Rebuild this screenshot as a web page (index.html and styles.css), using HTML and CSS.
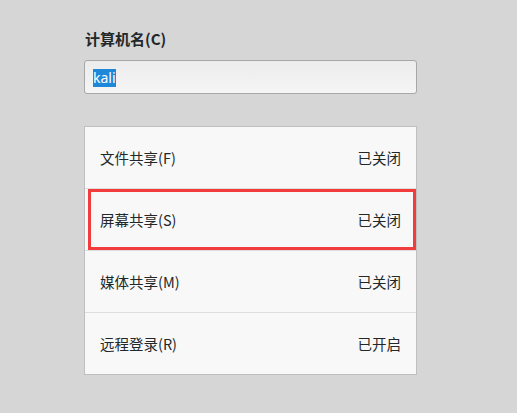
FILE: index.html
```html
<!DOCTYPE html>
<html lang="zh-CN">
<head>
<meta charset="utf-8">
<link rel="stylesheet" href="styles.css">
</head>
<body>
<div class="page">
  <div class="label">计算机名(C)</div>
  <div class="entry"><span class="sel">kali</span></div>
  <div class="list">
    <div class="row"><span>文件共享(F)</span><span>已关闭</span></div>
    <div class="row marked"><span>屏幕共享(S)</span><span>已关闭</span><div class="mark"></div></div>
    <div class="row"><span>媒体共享(M)</span><span>已关闭</span></div>
    <div class="row"><span>远程登录(R)</span><span>已开启</span></div>
  </div>
</div>
</body>
</html>
```
FILE: styles.css
```css
html, body {
  margin: 0;
  padding: 0;
  background: #d6d6d6;
}
body {
  font-family: "Noto Sans CJK SC", "Noto Sans", sans-serif;
  font-size: 14.5px;
  color: #222829;
}
.page {
  width: 333px;
  margin-left: 84px;
  padding-top: 29px;
}
.label {
  font-weight: bold;
  font-size: 15px;
  line-height: 20px;
  padding-left: 1px;
  height: 20px;
}
.entry {
  margin-top: 11px;
  box-sizing: border-box;
  height: 34px;
  width: 333px;
  border: 1px solid #a8a8a8;
  border-radius: 3px;
  background: linear-gradient(#ececec, #f5f5f5);
  padding-left: 8px;
  display: flex;
  align-items: center;
}
.sel {
  background: #1e88d8;
  color: #fff;
  font-family: "Noto Sans", sans-serif;
  font-size: 14px;
  line-height: 18px;
  height: 18px;
  margin-top: 2px;
}
.list {
  margin-top: 32px;
  width: 333px;
  box-sizing: border-box;
  border: 1px solid #bfbfbf;
  background: #f8f8f8;
}
.row {
  position: relative;
  height: 61px;
  display: flex;
  justify-content: space-between;
  align-items: center;
  padding: 0 15px;
  border-top: 1px solid #dedede;
}
.row:first-child {
  border-top: none;
}
.mark {
  position: absolute;
  left: 3px;
  top: 0;
  right: 0;
  bottom: 0;
  border: 3px solid #f23b3b;
}
```
